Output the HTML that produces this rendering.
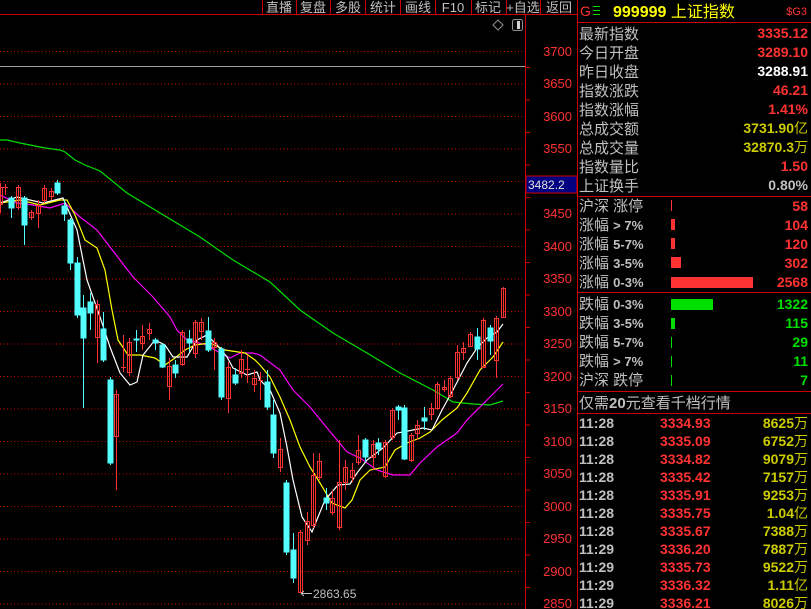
<!DOCTYPE html>
<html><head><meta charset="utf-8"><style>
html,body{margin:0;padding:0;background:#000;}
svg{display:block;}
text{font-family:"Liberation Sans","Noto Sans CJK SC",sans-serif;}
</style></head><body>
<svg width="811" height="609" viewBox="0 0 811 609" xmlns="http://www.w3.org/2000/svg">
<rect width="811" height="609" fill="#000"/>
<g stroke="#d00000" stroke-width="1" stroke-dasharray="1 2.5">
<line x1="0" y1="51.5" x2="525" y2="51.5"/><line x1="0" y1="84" x2="525" y2="84"/><line x1="0" y1="116.5" x2="525" y2="116.5"/><line x1="0" y1="149" x2="525" y2="149"/><line x1="0" y1="181.5" x2="525" y2="181.5"/><line x1="0" y1="214" x2="525" y2="214"/><line x1="0" y1="246.5" x2="525" y2="246.5"/><line x1="0" y1="279" x2="525" y2="279"/><line x1="0" y1="311.5" x2="525" y2="311.5"/><line x1="0" y1="344" x2="525" y2="344"/><line x1="0" y1="376.5" x2="525" y2="376.5"/><line x1="0" y1="409" x2="525" y2="409"/><line x1="0" y1="441.5" x2="525" y2="441.5"/><line x1="0" y1="474" x2="525" y2="474"/><line x1="0" y1="506.5" x2="525" y2="506.5"/><line x1="0" y1="539" x2="525" y2="539"/><line x1="0" y1="571.5" x2="525" y2="571.5"/><line x1="0" y1="604" x2="525" y2="604"/>
</g>
<line x1="0" y1="66.5" x2="525" y2="66.5" stroke="#a0a0a0"/>
<g stroke="#d00000" stroke-width="1">
<line x1="0" y1="14.5" x2="577" y2="14.5"/>
<line x1="525.5" y1="14" x2="525.5" y2="609"/>
<line x1="577.5" y1="0" x2="577.5" y2="609"/>
<line x1="262.5" y1="0" x2="262.5" y2="14"/><line x1="296.5" y1="0" x2="296.5" y2="14"/><line x1="330.5" y1="0" x2="330.5" y2="14"/><line x1="365.5" y1="0" x2="365.5" y2="14"/><line x1="400.5" y1="0" x2="400.5" y2="14"/><line x1="435.5" y1="0" x2="435.5" y2="14"/><line x1="471.5" y1="0" x2="471.5" y2="14"/><line x1="506.5" y1="0" x2="506.5" y2="14"/><line x1="540.5" y1="0" x2="540.5" y2="14"/>
<line x1="577" y1="22.5" x2="811" y2="22.5"/>
<line x1="577" y1="196.5" x2="811" y2="196.5"/>
<line x1="577" y1="292.5" x2="811" y2="292.5"/>
<line x1="577" y1="391.5" x2="811" y2="391.5"/>
<line x1="577" y1="413.5" x2="811" y2="413.5"/>
</g>
<g stroke="#d00000">
<line x1="526" y1="67.5" x2="530" y2="67.5"/><line x1="526" y1="100" x2="530" y2="100"/><line x1="526" y1="132.5" x2="530" y2="132.5"/><line x1="526" y1="165" x2="530" y2="165"/><line x1="526" y1="197.5" x2="530" y2="197.5"/><line x1="526" y1="230" x2="530" y2="230"/><line x1="526" y1="262.5" x2="530" y2="262.5"/><line x1="526" y1="295" x2="530" y2="295"/><line x1="526" y1="327.5" x2="530" y2="327.5"/><line x1="526" y1="360" x2="530" y2="360"/><line x1="526" y1="392.5" x2="530" y2="392.5"/><line x1="526" y1="425" x2="530" y2="425"/><line x1="526" y1="457.5" x2="530" y2="457.5"/><line x1="526" y1="490" x2="530" y2="490"/><line x1="526" y1="522.5" x2="530" y2="522.5"/><line x1="526" y1="555" x2="530" y2="555"/><line x1="526" y1="587.5" x2="530" y2="587.5"/>
</g>
<g fill="#c0c0c0" font-size="13" text-anchor="middle">
<text x="279" y="12">直播</text><text x="313" y="12">复盘</text><text x="348" y="12">多股</text><text x="383" y="12">统计</text><text x="418" y="12">画线</text><text x="453" y="12">F10</text><text x="488" y="12">标记</text><text x="523" y="12">+自选</text><text x="559" y="12">返回</text>
</g>
<path d="M498 20 L503 25 L498 30 L493 25 Z" fill="none" stroke="#909090"/>
<rect x="512.5" y="19.5" width="10" height="11" rx="2" fill="none" stroke="#909090"/>
<rect x="517" y="21" width="3" height="8" fill="#d0d0d0"/>
<g fill="#ff3232" font-size="13" text-anchor="end">
<text x="572" y="56">3700</text><text x="572" y="88">3650</text><text x="572" y="121">3600</text><text x="572" y="153">3550</text><text x="572" y="218">3450</text><text x="572" y="251">3400</text><text x="572" y="283">3350</text><text x="572" y="316">3300</text><text x="572" y="348">3250</text><text x="572" y="381">3200</text><text x="572" y="413">3150</text><text x="572" y="446">3100</text><text x="572" y="478">3050</text><text x="572" y="511">3000</text><text x="572" y="543">2950</text><text x="572" y="576">2900</text><text x="572" y="608">2850</text>
</g>
<rect x="526" y="176" width="51" height="17" fill="#000080" stroke="#d00000"/>
<text x="528" y="189" fill="#e0e0e0" font-size="12">3482.2</text>
<g fill="none" stroke-width="1.2">
<polyline stroke="#00e000" points="0,140 7,140 20,143 30,145 45,148 60,150 65,152 75,160 85,165 100,171 127,193 160,213 200,237 233,260 270,282 300,310 333,333 367,353 400,373 433,390 453,402 473,404 490,405 503,401"/>
<polyline stroke="#ff00ff" points="0,195 17,203 33,205 50,208 65,203 80,217 97,230 110,247 133,277 153,297 170,317 177,330 187,340 207,345 220,353 230,358 240,353 253,353 260,355 280,370 293,390 310,407 323,423 337,440 347,452 360,458 377,470 393,475 410,475 420,463 437,447 457,433 467,420 487,400 503,384"/>
<polyline stroke="#ffff00" points="0,203 20,200 40,205 60,200 67,200 75,215 85,240 97,248 105,270 112,310 118,340 128,355 140,355 155,358 165,365 175,358 185,350 195,345 210,343 225,350 245,353 255,360 260,365 270,377 280,397 290,420 300,447 310,467 320,483 332,503 345,508 352,500 360,480 370,470 385,467 395,450 407,443 420,438 430,432 442,420 457,408 467,393 480,370 493,357 503,342"/>
<polyline stroke="#ffffff" points="0,203 17,197 43,203 63,198 77,230 87,280 100,317 110,347 120,373 130,385 137,382 143,355 155,340 165,345 173,357 187,357 197,340 207,335 217,345 227,357 233,368 247,375 257,372 260,380 270,390 280,413 287,447 293,480 302,517 312,532 318,517 325,500 338,485 350,484 357,473 367,460 383,448 397,433 403,432 413,430 423,428 432,430 442,410 453,390 467,363 477,348 487,338 497,332 503,324"/>
</g>
<g stroke-width="1">
<g stroke="#ff3232" fill="none">
<line x1="0.5" y1="183" x2="0.5" y2="213"/><rect x="-1.5" y="187.5" width="4" height="17"/>
<line x1="5.5" y1="184" x2="5.5" y2="195"/><line x1="3" y1="187.5" x2="8" y2="187.5"/>
<line x1="18.5" y1="185" x2="18.5" y2="210"/><rect x="16.5" y="187.5" width="4" height="20"/>
<line x1="31.5" y1="210" x2="31.5" y2="220"/><rect x="29.5" y="212.5" width="4" height="5"/>
<line x1="38.5" y1="200" x2="38.5" y2="228"/><rect x="36.5" y="205.5" width="4" height="8"/>
<line x1="44.5" y1="185" x2="44.5" y2="203"/><rect x="42.5" y="188.5" width="4" height="12"/>
<line x1="51.5" y1="188" x2="51.5" y2="200"/><rect x="49.5" y="191.5" width="4" height="5"/>
<line x1="97.5" y1="300" x2="97.5" y2="363"/><rect x="95.5" y="304.5" width="4" height="33"/>
<line x1="116.5" y1="390" x2="116.5" y2="490"/><rect x="114.5" y="394.5" width="4" height="42"/>
<line x1="123.5" y1="335" x2="123.5" y2="372"/><line x1="121" y1="367.5" x2="126" y2="367.5"/>
<line x1="129.5" y1="338" x2="129.5" y2="376"/><rect x="127.5" y="342.5" width="4" height="30"/>
<line x1="142.5" y1="325" x2="142.5" y2="350"/><rect x="140.5" y="336.5" width="4" height="7"/>
<line x1="149.5" y1="323" x2="149.5" y2="340"/><rect x="147.5" y="329.5" width="4" height="4"/>
<line x1="169.5" y1="358" x2="169.5" y2="400"/><rect x="167.5" y="366.5" width="4" height="20"/>
<line x1="182.5" y1="330" x2="182.5" y2="366"/><rect x="180.5" y="332.5" width="4" height="32"/>
<line x1="195.5" y1="320" x2="195.5" y2="358"/><rect x="193.5" y="322.5" width="4" height="31"/>
<line x1="201.5" y1="318" x2="201.5" y2="340"/><rect x="199.5" y="322.5" width="4" height="9"/>
<line x1="214.5" y1="338" x2="214.5" y2="370"/><rect x="212.5" y="342.5" width="4" height="5"/>
<line x1="228.5" y1="362" x2="228.5" y2="413"/><rect x="226.5" y="367.5" width="4" height="31"/>
<line x1="241.5" y1="350" x2="241.5" y2="378"/><rect x="239.5" y="359.5" width="4" height="14"/>
<line x1="247.5" y1="355" x2="247.5" y2="383"/><line x1="245" y1="369.5" x2="250" y2="369.5"/>
<line x1="254.5" y1="370" x2="254.5" y2="392"/><rect x="252.5" y="378.5" width="4" height="6"/>
<line x1="260.5" y1="372" x2="260.5" y2="400"/><line x1="258" y1="380.5" x2="263" y2="380.5"/>
<line x1="280.5" y1="438" x2="280.5" y2="472"/><rect x="278.5" y="449.5" width="4" height="18"/>
<line x1="300.5" y1="530" x2="300.5" y2="593"/><rect x="298.5" y="532.5" width="4" height="60"/>
<line x1="307.5" y1="512" x2="307.5" y2="545"/><rect x="305.5" y="521.5" width="4" height="19"/>
<line x1="313.5" y1="453" x2="313.5" y2="528"/><rect x="311.5" y="475.5" width="4" height="50"/>
<line x1="319.5" y1="453" x2="319.5" y2="480"/><rect x="317.5" y="461.5" width="4" height="16"/>
<line x1="332.5" y1="490" x2="332.5" y2="515"/><rect x="330.5" y="498.5" width="4" height="14"/>
<line x1="339.5" y1="440" x2="339.5" y2="530"/><rect x="337.5" y="482.5" width="4" height="45"/>
<line x1="345.5" y1="460" x2="345.5" y2="490"/><rect x="343.5" y="467.5" width="4" height="15"/>
<line x1="352.5" y1="463" x2="352.5" y2="482"/><rect x="350.5" y="470.5" width="4" height="7"/>
<line x1="358.5" y1="435" x2="358.5" y2="465"/><rect x="356.5" y="450.5" width="4" height="12"/>
<line x1="373.5" y1="440" x2="373.5" y2="470"/><rect x="371.5" y="444.5" width="4" height="13"/>
<line x1="385.5" y1="440" x2="385.5" y2="478"/><rect x="383.5" y="442.5" width="4" height="34"/>
<line x1="392.5" y1="408" x2="392.5" y2="440"/><rect x="390.5" y="410.5" width="4" height="27"/>
<line x1="411.5" y1="433" x2="411.5" y2="462"/><rect x="409.5" y="435.5" width="4" height="25"/>
<line x1="417.5" y1="420" x2="417.5" y2="440"/><rect x="415.5" y="425.5" width="4" height="8"/>
<line x1="431.5" y1="403" x2="431.5" y2="420"/><rect x="429.5" y="408.5" width="4" height="6"/>
<line x1="437.5" y1="382" x2="437.5" y2="410"/><rect x="435.5" y="384.5" width="4" height="24"/>
<line x1="444.5" y1="380" x2="444.5" y2="392"/><rect x="442.5" y="387.5" width="4" height="2"/>
<line x1="450.5" y1="376" x2="450.5" y2="398"/><rect x="448.5" y="378.5" width="4" height="18"/>
<line x1="457.5" y1="345" x2="457.5" y2="380"/><rect x="455.5" y="352.5" width="4" height="25"/>
<line x1="463.5" y1="342" x2="463.5" y2="360"/><rect x="461.5" y="348.5" width="4" height="4"/>
<line x1="470.5" y1="332" x2="470.5" y2="347"/><rect x="468.5" y="334.5" width="4" height="12"/>
<line x1="483.5" y1="318" x2="483.5" y2="368"/><rect x="481.5" y="320.5" width="4" height="47"/>
<line x1="496.5" y1="316" x2="496.5" y2="378"/><rect x="494.5" y="318.5" width="4" height="42"/>
<line x1="503.5" y1="287" x2="503.5" y2="318"/><rect x="501.5" y="288.5" width="4" height="29"/>
</g>
<g stroke="#54ffff" fill="#54ffff">
<line x1="11.5" y1="196" x2="11.5" y2="218"/><rect x="9" y="198" width="5" height="10"/>
<line x1="24.5" y1="196" x2="24.5" y2="245"/><rect x="22" y="198" width="5" height="27"/>
<line x1="57.5" y1="180" x2="57.5" y2="195"/><rect x="55" y="183" width="5" height="10"/>
<line x1="64.5" y1="200" x2="64.5" y2="221"/><rect x="62" y="206" width="5" height="8"/>
<line x1="70.5" y1="218" x2="70.5" y2="270"/><rect x="68" y="220" width="5" height="43"/>
<line x1="77.5" y1="257" x2="77.5" y2="318"/><rect x="75" y="263" width="5" height="52"/>
<line x1="83.5" y1="295" x2="83.5" y2="408"/><rect x="81" y="308" width="5" height="30"/>
<line x1="90.5" y1="293" x2="90.5" y2="330"/><rect x="88" y="302" width="5" height="11"/>
<line x1="103.5" y1="312" x2="103.5" y2="362"/><rect x="101" y="329" width="5" height="31"/>
<line x1="110.5" y1="377" x2="110.5" y2="465"/><rect x="108" y="380" width="5" height="83"/>
<line x1="136.5" y1="330" x2="136.5" y2="352"/><rect x="134" y="339" width="5" height="1"/>
<line x1="155.5" y1="338" x2="155.5" y2="350"/><rect x="153" y="340" width="5" height="3"/>
<line x1="162.5" y1="343" x2="162.5" y2="368"/><rect x="160" y="345" width="5" height="22"/>
<line x1="175.5" y1="360" x2="175.5" y2="378"/><rect x="173" y="365" width="5" height="8"/>
<line x1="189.5" y1="330" x2="189.5" y2="352"/><rect x="187" y="339" width="5" height="4"/>
<line x1="208.5" y1="317" x2="208.5" y2="352"/><rect x="206" y="331" width="5" height="19"/>
<line x1="221.5" y1="347" x2="221.5" y2="400"/><rect x="219" y="349" width="5" height="48"/>
<line x1="235.5" y1="368" x2="235.5" y2="385"/><rect x="233" y="375" width="5" height="8"/>
<line x1="267.5" y1="370" x2="267.5" y2="410"/><rect x="265" y="382" width="5" height="25"/>
<line x1="273.5" y1="400" x2="273.5" y2="458"/><rect x="271" y="415" width="5" height="38"/>
<line x1="286.5" y1="480" x2="286.5" y2="555"/><rect x="284" y="483" width="5" height="69"/>
<line x1="293.5" y1="533" x2="293.5" y2="583"/><rect x="291" y="550" width="5" height="28"/>
<line x1="326.5" y1="488" x2="326.5" y2="510"/><rect x="324" y="498" width="5" height="5"/>
<line x1="365.5" y1="438" x2="365.5" y2="462"/><rect x="363" y="440" width="5" height="17"/>
<line x1="378.5" y1="438" x2="378.5" y2="455"/><rect x="376" y="443" width="5" height="6"/>
<line x1="398.5" y1="405" x2="398.5" y2="420"/><rect x="396" y="407" width="5" height="3"/>
<line x1="404.5" y1="405" x2="404.5" y2="460"/><rect x="402" y="408" width="5" height="51"/>
<line x1="424.5" y1="407" x2="424.5" y2="430"/><rect x="422" y="418" width="5" height="3"/>
<line x1="477.5" y1="328" x2="477.5" y2="360"/><rect x="475" y="337" width="5" height="12"/>
<line x1="490.5" y1="325" x2="490.5" y2="355"/><rect x="488" y="328" width="5" height="13"/>
</g>
</g>
<line x1="301" y1="593.5" x2="312" y2="593.5" stroke="#c0c0c0"/>
<path d="M301 593.5 L304 591 M301 593.5 L304 596" stroke="#c0c0c0" fill="none"/>
<text x="313" y="598" fill="#c0c0c0" font-size="12">2863.65</text>
<text x="580" y="16" fill="#ff3232" font-size="14">G</text>
<g stroke="#00e000"><line x1="593" y1="6.5" x2="600" y2="6.5"/><line x1="593" y1="10.5" x2="600" y2="10.5"/><line x1="593" y1="14.5" x2="600" y2="14.5"/></g>
<text x="613" y="17" fill="#ffff00" font-size="16" font-weight="bold">999999 <tspan font-weight="normal">上证指数</tspan></text>
<text x="807" y="15" fill="#ff3232" font-size="11" text-anchor="end">$G3</text>
<g fill="#c0c0c0" font-size="15">
<text x="579" y="39">最新指数</text><text x="579" y="58">今日开盘</text><text x="579" y="77">昨日收盘</text><text x="579" y="96">指数涨跌</text><text x="579" y="115">指数涨幅</text><text x="579" y="134">总成交额</text><text x="579" y="153">总成交量</text><text x="579" y="172">指数量比</text><text x="579" y="191">上证换手</text>
</g>
<g font-size="14" font-weight="bold" text-anchor="end">
<text x="808" y="38" fill="#ff3232">3335.12</text>
<text x="808" y="57" fill="#ff3232">3289.10</text>
<text x="808" y="76" fill="#ffffff">3288.91</text>
<text x="808" y="95" fill="#ff3232">46.21</text>
<text x="808" y="114" fill="#ff3232">1.41%</text>
<text x="808" y="133" fill="#cccc00">3731.90<tspan font-weight="normal">亿</tspan></text>
<text x="808" y="152" fill="#cccc00">32870.3<tspan font-weight="normal">万</tspan></text>
<text x="808" y="171" fill="#ff3232">1.50</text>
<text x="808" y="190" fill="#c0c0c0">0.80%</text>
</g>
<g fill="#c0c0c0" font-size="15">
<text x="579" y="211">沪深 涨停</text><text x="579" y="230">涨幅 <tspan font-size="13" font-weight="bold">&gt; 7%</tspan></text><text x="579" y="249">涨幅 <tspan font-size="13" font-weight="bold">5-7%</tspan></text><text x="579" y="268">涨幅 <tspan font-size="13" font-weight="bold">3-5%</tspan></text><text x="579" y="287">涨幅 <tspan font-size="13" font-weight="bold">0-3%</tspan></text>
<text x="579" y="309">跌幅 <tspan font-size="13" font-weight="bold">0-3%</tspan></text><text x="579" y="328">跌幅 <tspan font-size="13" font-weight="bold">3-5%</tspan></text><text x="579" y="347">跌幅 <tspan font-size="13" font-weight="bold">5-7%</tspan></text><text x="579" y="366">跌幅 <tspan font-size="13" font-weight="bold">&gt; 7%</tspan></text><text x="579" y="385">沪深 跌停</text>
</g>
<g fill="#ff3232">
<rect x="671" y="200" width="1" height="11"/><rect x="671" y="219" width="4" height="11"/><rect x="671" y="238" width="4" height="11"/><rect x="671" y="257" width="10" height="11"/><rect x="671" y="277" width="82" height="11"/>
</g>
<g fill="#00e000">
<rect x="671" y="299" width="42" height="11"/><rect x="671" y="318" width="4" height="11"/><rect x="671" y="337" width="1" height="11"/><rect x="671" y="356" width="1" height="11"/><rect x="671" y="375" width="1" height="11"/>
</g>
<g font-size="14" font-weight="bold" text-anchor="end">
<text x="808" y="211" fill="#ff3232">58</text><text x="808" y="230" fill="#ff3232">104</text><text x="808" y="249" fill="#ff3232">120</text><text x="808" y="268" fill="#ff3232">302</text><text x="808" y="287" fill="#ff3232">2568</text>
<text x="808" y="309" fill="#00e000">1322</text><text x="808" y="328" fill="#00e000">115</text><text x="808" y="347" fill="#00e000">29</text><text x="808" y="366" fill="#00e000">11</text><text x="808" y="385" fill="#00e000">7</text>
</g>
<text x="579" y="408" fill="#c0c0c0" font-size="15">仅需<tspan font-weight="bold">20</tspan>元查看千档行情</text>
<g font-size="14" font-weight="bold">
<g fill="#c0c0c0"><text x="579" y="428">11:28</text><text x="579" y="446">11:28</text><text x="579" y="464">11:28</text><text x="579" y="482">11:28</text><text x="579" y="500">11:28</text><text x="579" y="518">11:28</text><text x="579" y="536">11:28</text><text x="579" y="554">11:29</text><text x="579" y="572">11:29</text><text x="579" y="590">11:29</text><text x="579" y="608">11:29</text></g>
<g fill="#ff3232"><text x="660" y="428">3334.93</text><text x="660" y="446">3335.09</text><text x="660" y="464">3334.82</text><text x="660" y="482">3335.42</text><text x="660" y="500">3335.91</text><text x="660" y="518">3335.75</text><text x="660" y="536">3335.67</text><text x="660" y="554">3336.20</text><text x="660" y="572">3335.73</text><text x="660" y="590">3336.32</text><text x="660" y="608">3336.21</text></g>
<g fill="#cccc00" text-anchor="end"><text x="808" y="428">8625<tspan font-weight="normal">万</tspan></text><text x="808" y="446">6752<tspan font-weight="normal">万</tspan></text><text x="808" y="464">9079<tspan font-weight="normal">万</tspan></text><text x="808" y="482">7157<tspan font-weight="normal">万</tspan></text><text x="808" y="500">9253<tspan font-weight="normal">万</tspan></text><text x="808" y="518">1.04<tspan font-weight="normal">亿</tspan></text><text x="808" y="536">7388<tspan font-weight="normal">万</tspan></text><text x="808" y="554">7887<tspan font-weight="normal">万</tspan></text><text x="808" y="572">9522<tspan font-weight="normal">万</tspan></text><text x="808" y="590">1.11<tspan font-weight="normal">亿</tspan></text><text x="808" y="608">8026<tspan font-weight="normal">万</tspan></text></g>
</g>
</svg>
</body></html>
